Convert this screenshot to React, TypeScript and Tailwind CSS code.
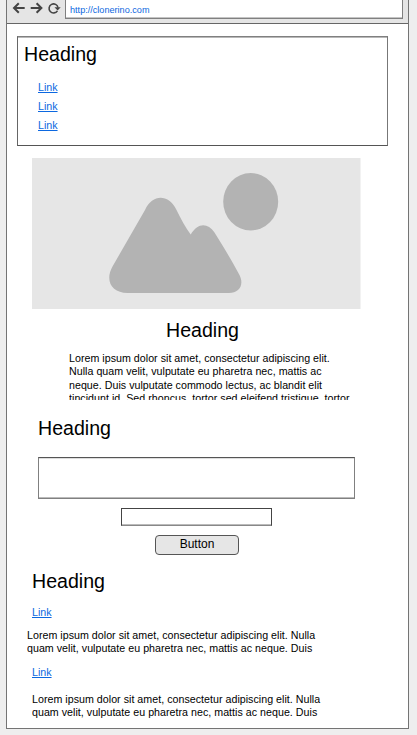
import React from "react";

function Heading({ className = "" }: { className?: string }) {
  return (
    <h2 className={`h-6 w-fit text-[19.6px] leading-6 whitespace-nowrap text-black ${className}`}>Heading</h2>
  );
}

function Link({ className = "" }: { className?: string }) {
  return (
    <a
      href="#"
      className={`block w-fit text-[10.67px] leading-[19px] text-[#0c68e0] underline decoration-1 underline-offset-1 ${className}`}
    >
      Link
    </a>
  );
}

function Toolbar() {
  return (
    <header className="flex h-6 border-b border-[#666] bg-[#e5e5e5]">
      <svg width="58" height="18" viewBox="0 0 58 18" fill="none" stroke="#444" strokeWidth="2" className="shrink-0">
        <path d="M17.7 8H7M11.8 3.200L7 8l4.800 4.800" />
        <path d="M23.700 8h10.700M29.600 3.200L34.400 8l-4.800 4.800" />
        <path d="M50.400 10.800A4.500 4.500 0 1 1 51 7.600" strokeWidth="1.6" />
        <path d="M47.500 7.300h6.200L50.600 10.500z" fill="#444" stroke="none" />
      </svg>
      <div className="h-[19px] w-[338px] border-x border-b border-[#808080] bg-white pl-[4px] text-[9.12px] leading-[20px] text-[#0c68e0] shadow-[inset_0_-1px_#c4c4c4]">
        http://clonerino.com
      </div>
    </header>
  );
}

function Placeholder() {
  return (
    <svg width="329" height="151" viewBox="0 0 329 151" className="mt-3 ml-[25px] block">
      <path d="M0 0h328.5v151H0z" fill="#e6e6e6" />
      <ellipse cx="218.7" cy="43.7" rx="27.5" ry="28.7" fill="#b3b3b3" />
      <path
        d="M95.5 135C80 135 72.500 123 80.500 108.500L113 52C120.500 36 136 36 144 51C149 61 153.500 69.500 158.700 76.500C166 64.500 175.500 64.500 182.500 74.500C190.500 87 201 105 207.500 117C212.500 127 207 135 197 135Z"
        fill="#b3b3b3"
      />
    </svg>
  );
}

const bodyText = "overflow-hidden text-[10.67px] leading-[13.4px] tracking-[0.025px] whitespace-nowrap text-black";

export default function App() {
  return (
    <div className="h-[735px] w-[417px] overflow-hidden bg-[#eee] pl-[6px] font-['Liberation_Sans',Arial,sans-serif]">
      <main className="h-[729px] w-[403px] border-x border-b border-[#747474] bg-white">
        <Toolbar />
        <section className="mt-3 ml-[10px] h-[110px] w-[371px] border border-t-[#808080] border-r-[#777] border-b-[#555] border-l-[#666] pl-[6px] shadow-[inset_0_1px_#b8b8b8]">
          <Heading className="mt-[5px]" />
          <nav className="mt-[12px] ml-[14px]">
            <Link />
            <Link />
            <Link />
          </nav>
        </section>
        <Placeholder />
        <section className="ml-[62px]">
          <Heading className="mt-[9px] ml-[97px]" />
          <p className={`mt-[10px] h-[48px] ${bodyText}`}>
            Lorem ipsum dolor sit amet, consectetur adipiscing elit.
            <br />
            Nulla quam velit, vulputate eu pharetra nec, mattis ac
            <br />
            neque. Duis vulputate commodo lectus, ac blandit elit
            <br />
            tincidunt id. Sed rhoncus, tortor sed eleifend tristique, tortor
          </p>
        </section>
        <form className="flex flex-col">
          <Heading className="mt-4 ml-[31px]" />
          <textarea className="mt-[17px] ml-[31px] block h-[42px] w-[317px] resize-none border border-[#808080] border-t-[#555] shadow-[inset_0_1px_#ddd,inset_0_-1px_#bbb]" />
          <input className="mt-[9px] ml-[114px] block h-[18px] w-[151px] border border-[#444] border-b-[#888] shadow-[inset_0_-1px_#bbb]" />
          <button
            type="button"
            className="mt-[9px] ml-[148px] h-5 w-[84px] rounded-[4px] border border-[#555] bg-[#e6e6e6] pb-[2px] text-[12px] leading-[16px] text-black"
          >
            Button
          </button>
        </form>
        <section>
          <Heading className="mt-[14px] ml-[25px]" />
          <Link className="mt-[10px] ml-[25px]" />
          <p className={`mt-[7px] ml-[20px] h-[27px] ${bodyText}`}>
            Lorem ipsum dolor sit amet, consectetur adipiscing elit. Nulla
            <br />
            quam velit, vulputate eu pharetra nec, mattis ac neque. Duis
          </p>
          <Link className="mt-[7px] ml-[25px]" />
          <p className={`mt-[11px] ml-[25px] h-[25px] ${bodyText}`}>
            Lorem ipsum dolor sit amet, consectetur adipiscing elit. Nulla
            <br />
            quam velit, vulputate eu pharetra nec, mattis ac neque. Duis
          </p>
        </section>
      </main>
    </div>
  );
}
